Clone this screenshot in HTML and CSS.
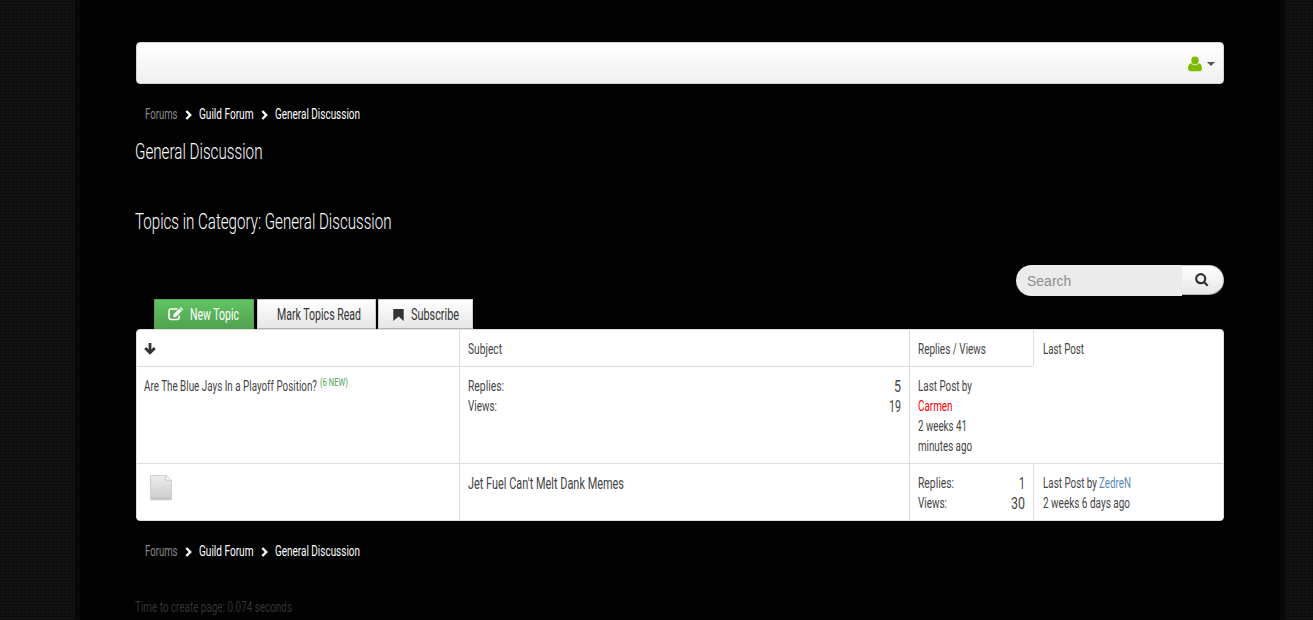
FILE: index.html
```html
<!DOCTYPE html>
<html lang="en">
<head>
<meta charset="utf-8">
<title>General Discussion</title>
<link rel="stylesheet" href="styles.css">
</head>
<body>
<main class="page">
  <header class="navbar">
    <svg class="user" width="14" height="16" viewBox="0 0 14 16"><ellipse cx="7" cy="4.600" rx="3.700" ry="4"/><path d="M3.200 7.200C1 7.500 0 9.700 0 12.300C0 14.200 1 15.300 2.800 15.300H11.200C13 15.300 14 14.200 14 12.300C14 9.700 13 7.500 10.800 7.200C9.800 8.700 8.500 9.300 7 9.300S4.200 8.700 3.200 7.200Z"/></svg>
    <span class="caret"></span>
  </header>

  <nav class="crumbs">
    <span class="fit muted" data-w="32.500">Forums</span>
    <svg class="chev" width="7" height="10" viewBox="0 0 7 10"><path d="M1.300 1L5.200 5L1.300 9"/></svg>
    <span class="fit" data-w="54.500">Guild Forum</span>
    <svg class="chev" width="7" height="10" viewBox="0 0 7 10"><path d="M1.300 1L5.200 5L1.300 9"/></svg>
    <span class="fit" data-w="85">General Discussion</span>
  </nav>

  <h1 class="heading"><span class="fit" data-w="127.500">General Discussion</span></h1>
  <h2 class="heading second"><span class="fit" data-w="256.500">Topics in Category: General Discussion</span></h2>

  <form class="search">
    <div class="field">Search</div>
    <div class="go"><svg width="14" height="14" viewBox="0 0 14 14"><circle cx="5.700" cy="5.700" r="4.500"/><path d="M9 9L12.700 12.700"/></svg></div>
  </form>

  <div class="tabs">
    <div class="tab new">
      <svg width="15" height="14" viewBox="0 0 15 14"><path class="line" d="M9.500 2H3.200Q1 2 1 4.200V10.300Q1 12.500 3.200 12.500H9Q11.200 12.500 11.200 10.300V8.600"/><path class="solid" d="M5.300 7.500L11.300 1.500L13.800 4L7.800 10H5.300ZM11.900 .9L12.400 .4Q12.800 0 13.300 .4L14.800 1.900Q15.200 2.400 14.800 2.900L14.300 3.400Z"/></svg>
      <span class="fit" data-w="49">New Topic</span>
    </div>
    <div class="tab mark"><span class="fit" data-w="84">Mark Topics Read</span></div>
    <div class="tab sub">
      <svg width="11" height="12" viewBox="0 0 11 12"><path class="solid" d="M.3 0H10.700V12L5.500 7.600L.3 12Z"/></svg>
      <span class="fit" data-w="48">Subscribe</span>
    </div>
  </div>

  <section class="topics">
    <div class="row head">
      <div class="cell"><svg class="down" width="12" height="12" viewBox="0 0 12 12"><path d="M6 0V9.500M1.200 4.900L6 9.700L10.800 4.900"/></svg></div>
      <div class="cell"><span class="fit" data-w="34">Subject</span></div>
      <div class="cell"><span class="fit" data-w="68">Replies / Views</span></div>
      <div class="cell"><span class="fit" data-w="41">Last Post</span></div>
    </div>
    <div class="row first">
      <div class="cell topic"><span class="fit" data-w="173">Are The Blue Jays In a Playoff Position?</span><sup class="fit fresh" data-w="28">(6 NEW)</sup></div>
      <div class="cell">
        <div class="stat"><span class="fit" data-w="36">Replies:</span><span class="fit num" data-w="7">5</span></div>
        <div class="stat"><span class="fit" data-w="29">Views:</span><span class="fit num" data-w="12">19</span></div>
      </div>
      <div class="cell">
        <div><span class="fit" data-w="54">Last Post by</span></div>
        <div><span class="fit red" data-w="34.500">Carmen</span></div>
        <div><span class="fit" data-w="49">2 weeks 41</span></div>
        <div><span class="fit" data-w="54">minutes ago</span></div>
      </div>
    </div>
    <div class="row last">
      <div class="cell"><svg class="doc" width="24" height="28" viewBox="0 0 24 28"><defs><linearGradient id="paper" x1="0" y1="0" x2="0" y2="1"><stop offset="0" stop-color="#eeeeee"/><stop offset="1" stop-color="#cbcbcb"/></linearGradient></defs><path d="M1 25.500H22.500V26.500H1Z" fill="#e2e2e2"/><path d="M1.500 1.500H16.500L22.500 6.500V25H1.500Z" fill="url(#paper)" stroke="#d0d0d0"/><path d="M1.500 25H22.500" stroke="#b5b5b5"/><path d="M16.500 1.500V5Q16.500 6.500 18 6.500H22.500Z" fill="#f5f5f5" stroke="#d2d2d2"/></svg></div>
      <div class="cell"><span class="fit large" data-w="156">Jet Fuel Can't Melt Dank Memes</span></div>
      <div class="cell">
        <div class="stat"><span class="fit" data-w="36">Replies:</span><span class="fit num" data-w="6">1</span></div>
        <div class="stat"><span class="fit" data-w="29">Views:</span><span class="fit num" data-w="14">30</span></div>
      </div>
      <div class="cell">
        <div class="by"><span class="fit" data-w="54">Last Post by</span><span class="fit blue" data-w="32">ZedreN</span></div>
        <div><span class="fit" data-w="87">2 weeks 6 days ago</span></div>
      </div>
    </div>
  </section>

  <nav class="crumbs lower">
    <span class="fit muted" data-w="32.500">Forums</span>
    <svg class="chev" width="7" height="10" viewBox="0 0 7 10"><path d="M1.300 1L5.200 5L1.300 9"/></svg>
    <span class="fit" data-w="54.500">Guild Forum</span>
    <svg class="chev" width="7" height="10" viewBox="0 0 7 10"><path d="M1.300 1L5.200 5L1.300 9"/></svg>
    <span class="fit" data-w="85">General Discussion</span>
  </nav>
  <footer class="timing"><span class="fit" data-w="157">Time to create page: 0.074 seconds</span></footer>
</main>
<script src="fit.js"></script>
</body>
</html>
```
FILE: fit.js
```js
// Condenses each label horizontally to its set width.
document.querySelectorAll(".fit").forEach(function (el) {
  var inner = document.createElement("span");
  inner.className = "glyphs";
  inner.textContent = el.textContent;
  el.textContent = "";
  el.appendChild(inner);
  var natural = inner.getBoundingClientRect().width;
  var width = parseFloat(el.dataset.w);
  el.style.width = width + "px";
  inner.style.transform = "scaleX(" + width / natural + ")";
});
```
FILE: styles.css
```css
* { box-sizing: border-box; }
body {
  margin: 0;
  height: 620px;
  overflow: hidden;
  background-color: #131313;
  background-image:
    repeating-linear-gradient(0deg, rgba(0,0,0,.3) 0 1px, transparent 1px 3px),
    repeating-linear-gradient(90deg, rgba(0,0,0,.2) 0 1px, transparent 1px 4px);
  font: 15px/20px Roboto, "Liberation Sans", sans-serif;
  color: #444;
}
.page {
  width: 1210px;
  height: 620px;
  margin-left: 75px;
  padding: 42px 56px 0 55px;
  background: #020202;
  border: solid #080808;
  border-width: 0 5px;
}
.fit { display: inline-block; white-space: nowrap; flex: none; }
.glyphs { display: inline-block; transform-origin: 0 50%; }

.navbar {
  display: flex;
  align-items: center;
  justify-content: flex-end;
  gap: 5px;
  width: 1088px;
  height: 42px;
  margin-left: 1px;
  padding: 2px 8px 0 0;
  border: 1px solid #d4d4d4;
  border-radius: 4px;
  background: linear-gradient(#fff, #f0f0f0);
}
.user { fill: #7fba00; }
.caret { border: 4px solid transparent; border-top-color: #555; border-bottom: 0; }

.crumbs { display: flex; align-items: center; height: 20px; margin: 20px 0 0 10px; color: #fff; }
.muted { color: #8a8a8a; }
.chev { margin: 2px 7px 0 7.500px; fill: none; stroke: #fff; stroke-width: 2.400; }
.heading { margin: 13px 0 0; height: 30px; font-size: 22px; line-height: 30px; font-weight: 300; color: #fff; }
.second { margin-top: 40px; }

.search { display: flex; width: 208px; height: 31px; margin: 28px 0 0 881px; }
.field { width: 166px; padding-left: 11px; border-radius: 16px 0 0 16px; background: #ebebeb; color: #8e8e8e; font: 14px/32px "Liberation Sans", sans-serif; }
.go { display: flex; align-items: center; justify-content: center; width: 42px; height: 30px; padding-right: 1px; border: 1px solid #ccc; border-left: 0; border-bottom-color: #b3b3b3; border-radius: 0 15px 15px 0; background: linear-gradient(#fff, #e6e6e6); }
.go svg { fill: none; stroke: #333; stroke-width: 2.200; }

.tabs { display: flex; height: 30px; margin: 3px 0 0 19px; font-size: 17px; line-height: 30px; color: #333; }
.tab { display: flex; align-items: center; height: 30px; border: 1px solid #ccc; border-bottom-color: #b3b3b3; background: linear-gradient(#fff, #e6e6e6); }
.tab .solid { fill: currentColor; }
.tab .line { fill: none; stroke: currentColor; stroke-width: 1.600; }
.new { width: 100px; padding-left: 13px; gap: 7px; color: #fff; border-color: #51a351; background: linear-gradient(#62c462, #51a351); }
.mark { width: 119px; margin-left: 3px; padding-left: 19px; }
.sub { width: 95px; margin-left: 2px; padding-left: 14px; gap: 7px; }
.sub svg { margin-top: 2px; }

.topics { width: 1088px; height: 192px; margin-left: 1px; border: 1px solid #ddd; border-radius: 4px; background: #fff; overflow: hidden; }
.row { display: grid; grid-template-columns: 322px 450px 124px 190px; }
.head { height: 36px; }
.first { height: 97px; }
.last { height: 57px; }
.cell { padding: 9px 8px 0 7.500px; border-left: 1px solid #ddd; }
.cell:nth-child(4) { padding-left: 8.500px; }
.cell:first-child { border-left: 0; padding-left: 7px; }
.first .cell, .last .cell { border-top: 1px solid #ddd; }
.stat, .by { display: flex; justify-content: space-between; height: 20px; }
.by { justify-content: flex-start; gap: 2px; }
.num, .large { font-size: 17px; }
.topic { display: flex; gap: 2.500px; }
.fresh { font-size: 11px; line-height: 13px; color: #4f9f4f; }
.red { color: #f00; }
.blue { color: #5c8cb3; }
.down { display: block; margin-top: 4px; fill: none; stroke: #333; stroke-width: 2.800; }
.doc { display: block; margin: 1px 0 0 5px; }
.timing { height: 20px; margin-top: 36px; color: #333; }
```
